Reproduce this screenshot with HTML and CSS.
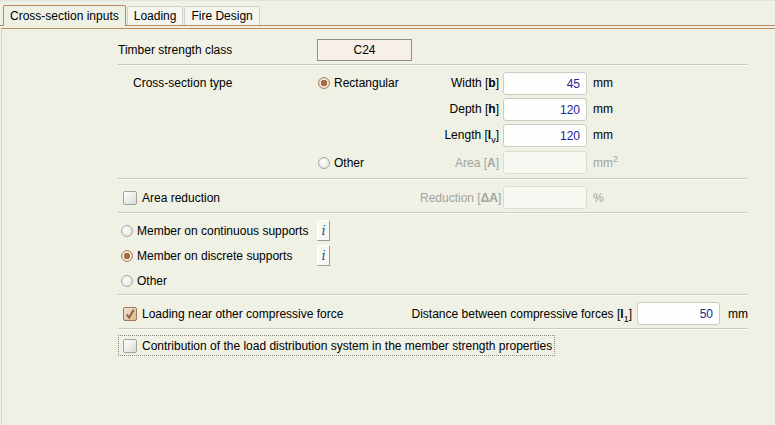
FILE: index.html
```html
<!DOCTYPE html>
<html lang="en">
<head>
  <meta charset="UTF-8" />
  <title>Cross-section inputs</title>
  <link rel="stylesheet" href="styles.css">
</head>
<body>

  <!-- Tabs -->
  <div class="tabs">
    <div class="tab active">Cross-section inputs</div>
    <div class="tab">Loading</div>
    <div class="tab">Fire Design</div>
  </div>

  <div class="panel">
    <div class="form">

      <!-- Strength class -->
      <div class="strength">
        <span class="strength-label">Timber strength class</span>
        <div class="combo">C24</div>
      </div>
      <div class="sep"></div>

      <!-- Cross-section type -->
      <div class="grid section-type">
        <span class="type-label">Cross-section type</span>
        <span class="opt"><span class="radio on"></span>Rectangular</span>
        <span class="field-label">Width [<b>b</b>]</span>
        <span class="input">45</span>
        <span class="unit">mm</span>

        <span></span><span></span>
        <span class="field-label">Depth [<b>h</b>]</span>
        <span class="input">120</span>
        <span class="unit">mm</span>

        <span></span><span></span>
        <span class="field-label">Length [<b>l</b><sub>v</sub>]</span>
        <span class="input">120</span>
        <span class="unit">mm</span>

        <span class="area-row"></span>
        <span class="opt area-row"><span class="radio"></span>Other</span>
        <span class="field-label off area-row">Area [<b>A</b>]</span>
        <span class="input off area-row"></span>
        <span class="unit off area-row">mm<sup>2</sup></span>
      </div>
      <div class="sep"></div>

      <!-- Area reduction -->
      <div class="grid section-reduction">
        <span class="opt wide"><span class="check"></span>Area reduction</span>
        <span class="field-label off">Reduction [<b>ΔA</b>]</span>
        <span class="input off"></span>
        <span class="unit off">%</span>
      </div>
      <div class="sep"></div>

      <!-- Supports -->
      <div class="supports">
        <div class="opt"><span class="radio"></span><span class="support-text">Member on continuous supports</span><span class="info">i</span></div>
        <div class="opt"><span class="radio on"></span><span class="support-text">Member on discrete supports</span><span class="info">i</span></div>
        <div class="opt"><span class="radio"></span>Other</div>
      </div>
      <div class="sep"></div>

      <!-- Compressive force -->
      <div class="compressive">
        <span class="opt"><span class="check on"><svg width="13" height="13" viewBox="0 0 13 13"><path d="M3 6.5 L5.5 10 L10.5 1.5" fill="none" stroke="#9a6236" stroke-width="2.2"/></svg></span>Loading near other compressive force</span>
        <span class="distance">
          <span>Distance between compressive forces [<b>l</b><sub>1</sub>]</span>
          <span class="input wide-input">50</span>
          <span class="unit">mm</span>
        </span>
      </div>
      <div class="sep"></div>

      <!-- Load distribution -->
      <div class="focus">
        <span class="opt"><span class="check"></span>Contribution of the load distribution system in the member strength properties</span>
      </div>

    </div>
  </div>

</body>
</html>
```

FILE: styles.css
```css
html, body {
  margin: 0;
  padding: 0;
  height: 100%;
}
body {
  font-family: "Liberation Sans", Arial, sans-serif;
  font-size: 12px;
  color: #000;
  background-color: #eff1e5;
}

/* Tabs */
.tabs {
  display: flex;
  align-items: flex-end;
  height: 26px;
  padding-left: 3px;
  border-top: 1px solid #e2e3da;
  box-sizing: border-box;
  border-bottom: 1px solid #bb8a60;
}
.tab {
  height: 19px;
  line-height: 18px;
  padding: 0 6px;
  margin-right: 1px;
  border: 1px solid #cfd0c6;
  border-bottom: none;
  border-radius: 2px 2px 0 0;
  background-color: #f4f5ee;
  box-sizing: border-box;
}
.tab.active {
  height: 21px;
  line-height: 20px;
  margin-bottom: -1px;
  border-color: #bb8a60;
  background-color: #eff1e5;
}

.panel {
  margin-top: 2px;
  border-top: 1px solid #bb8a60;
  border-left: 1px solid #e0d2c2;
  margin-left: 1px;
  height: 396px;
}
.form {
  width: 630px;
  padding: 10px 0 0 116px;
}

/* Separators */
.sep {
  height: 0;
  border-top: 1px solid #c9cac0;
  border-bottom: 1px solid #fbfbf7;
}

/* Strength class */
.strength {
  display: flex;
  align-items: center;
  height: 22px;
  margin-bottom: 3px;
}
.strength-label {
  width: 199px;
}
.combo {
  width: 93px;
  height: 20px;
  line-height: 20px;
  text-align: center;
  background-color: #f6f0e8;
  border: 1px solid #8f8f8f;
}

/* Grid rows */
.grid {
  display: grid;
  grid-template-columns: 199px 103px 83px 84px auto;
  align-items: center;
}
.section-type {
  grid-auto-rows: 26px;
  padding: 4px 0 4px;
}
.section-type .area-row {
  margin-top: 3px;
}
.section-type .radio {
  margin-left: 1px;
}
.section-reduction {
  grid-template-columns: 302px 83px 84px auto;
  height: 23px;
  padding: 6px 0 3px;
}
.type-label {
  padding-left: 15px;
}
.field-label {
  text-align: right;
  padding-right: 4px;
  white-space: nowrap;
}
.field-label sub, .distance sub {
  font-size: 9px;
  vertical-align: -4px;
  line-height: 0;
}
.unit {
  padding-left: 6px;
}
.unit sup {
  font-size: 9px;
  vertical-align: 5px;
  line-height: 0;
}
.off {
  color: #a3a39f;
}

/* Inputs */
.input {
  display: block;
  height: 23px;
  line-height: 23px;
  padding-right: 6px;
  box-sizing: border-box;
  text-align: right;
  color: #23239a;
  background-color: #fefefc;
  border: 1px solid #cbccc3;
  border-radius: 3px;
}
.input.off {
  background-color: #f6f7f0;
  border-color: #dcddd4;
}
.wide-input {
  width: 83px;
}

/* Radio and check */
.opt {
  display: flex;
  align-items: center;
  white-space: nowrap;
}
.radio {
  width: 10px;
  height: 10px;
  margin: 0 4px 0 3px;
  border-radius: 50%;
  border: 1px solid #a8a8a4;
  background: radial-gradient(circle at 40% 40%, #ffffff, #dcdcd6);
  box-sizing: content-box;
}
.radio.on {
  border-color: #a98567;
  background: radial-gradient(circle, #a86b42 0 3px, #f2e8de 3.5px, #d8c4b0);
}
.check {
  display: flex;
  width: 12px;
  height: 12px;
  margin: 0 5px 0 5px;
  border: 1px solid #a0a09c;
  border-radius: 2px;
  background: linear-gradient(135deg, #ffffff, #dcdcd5);
}
.check.on {
  border-color: #a07858;
  background: linear-gradient(135deg, #f3e3d2, #d8b898);
}

/* Supports */
.supports {
  padding: 4px 0 1px;
}
.supports .opt {
  height: 25px;
}
.support-text {
  width: 180px;
}
.info {
  width: 11px;
  height: 19px;
  line-height: 19px;
  text-align: center;
  font-style: italic;
  font-family: "DejaVu Serif", serif;
  font-size: 13px;
  color: #2c4f96;
  background-color: #f8f8f2;
  border: 1px solid #ffffff;
  border-right-color: #9a9a94;
  border-bottom-color: #9a9a94;
}

/* Compressive force */
.compressive {
  display: flex;
  align-items: center;
  justify-content: space-between;
  height: 23px;
  padding: 6px 0 3px;
}
.distance {
  display: flex;
  align-items: center;
  gap: 5px;
}
.distance .unit {
  padding-left: 3px;
}

/* Focus rectangle */
.focus {
  display: inline-flex;
  height: 19px;
  margin-top: 5px;
  padding-right: 2px;
  border: 1px dotted #8a8a86;
}
.focus .check {
  margin-left: 4px;
}
```
